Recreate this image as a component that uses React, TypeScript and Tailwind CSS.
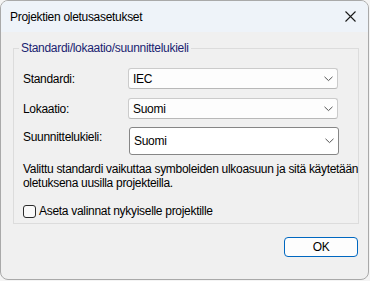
import React from "react";

function Chevron() {
  return (
    <svg width="9" height="6" viewBox="0 0 9 6" className="shrink-0">
      <path d="M0.5 0.8 L4.5 4.6 L8.5 0.8" fill="none" stroke="#555" strokeWidth="1" />
    </svg>
  );
}

function Combo({ value, focused }: { value: string; focused?: boolean }) {
  return (
    <div
      className={
        focused
          ? "flex items-center justify-between w-[210px] h-[28px] border border-[#868686] rounded-[3px] bg-white pl-[4px] pr-[4px]"
          : "flex items-center justify-between w-[210px] h-[21px] border border-[#cbcbcb] border-b-[#b8b8b8] rounded-[3px] bg-[#fdfdfd] pl-[4px] pr-[4px]"
      }
    >
      <span className="text-[12px] leading-[14px] text-black">{value}</span>
      <Chevron />
    </div>
  );
}

export default function App() {
  return (
    <div
      className="w-[370px] h-[281px] bg-[#f4f4f4] tracking-[-0.3px]"
      style={{ fontFamily: '"Liberation Sans", Arial, sans-serif' }}
    >
      <div className="w-[369px] h-[280px] rounded-[8px] border border-[#a9a9a9] overflow-hidden bg-[#f0f0f0] flex flex-col">
        <div className="h-[31px] bg-[#eef3f9] flex items-center justify-between pl-[9px] pr-[12px] shrink-0">
          <span className="text-[12px] text-black leading-[14px]">Projektien oletusasetukset</span>
          <svg width="11" height="11" viewBox="0 0 11 11">
            <path d="M0.5 0.5 L10.5 10.5 M10.5 0.5 L0.5 10.5" stroke="#1a1a1a" strokeWidth="1.1" />
          </svg>
        </div>
        <div className="flex flex-col pl-[12px] pt-[16px]">
          <div className="relative w-[346px] h-[176px] border border-[#dcdcdc] pt-[19px] pl-[9px]">
            <span className="absolute -top-[8px] left-[5px] px-[2px] bg-[#f0f0f0] text-[12px] leading-[14px] text-[#1a2370]">
              Standardi/lokaatio/suunnittelukieli
            </span>
            <div className="flex items-center h-[21px]">
              <span className="w-[105px] text-[12px] leading-[14px] text-black">Standardi:</span>
              <Combo value="IEC" />
            </div>
            <div className="flex items-center h-[21px] mt-[9px]">
              <span className="w-[105px] text-[12px] leading-[14px] text-black">Lokaatio:</span>
              <Combo value="Suomi" />
            </div>
            <div className="flex items-start h-[28px] mt-[8px]">
              <span className="w-[106px] text-[12px] leading-[14px] text-black mt-[3px]">Suunnittelukieli:</span>
              <Combo value="Suomi" focused />
            </div>
            <p className="mt-[7px] text-[12px] leading-[14px] text-black w-[336px]">
              Valittu standardi vaikuttaa symboleiden ulkoasuun ja sitä käytetään oletuksena uusilla projekteilla.
            </p>
            <div className="flex items-center mt-[14px] h-[14px]">
              <div className="w-[13px] h-[13px] rounded-[3px] border border-[#2b2b2b] bg-[#f9f9f9]" />
              <span className="ml-[3px] text-[12px] leading-[14px] text-black">Aseta valinnat nykyiselle projektille</span>
            </div>
          </div>
          <div className="flex justify-end pr-[10px] mt-[13px]">
            <div className="w-[74px] h-[20px] rounded-[4px] border border-[#0067c0] bg-[#fdfdfd] flex items-center justify-center">
              <span className="text-[12px] leading-[14px] text-black">OK</span>
            </div>
          </div>
        </div>
      </div>
    </div>
  );
}
